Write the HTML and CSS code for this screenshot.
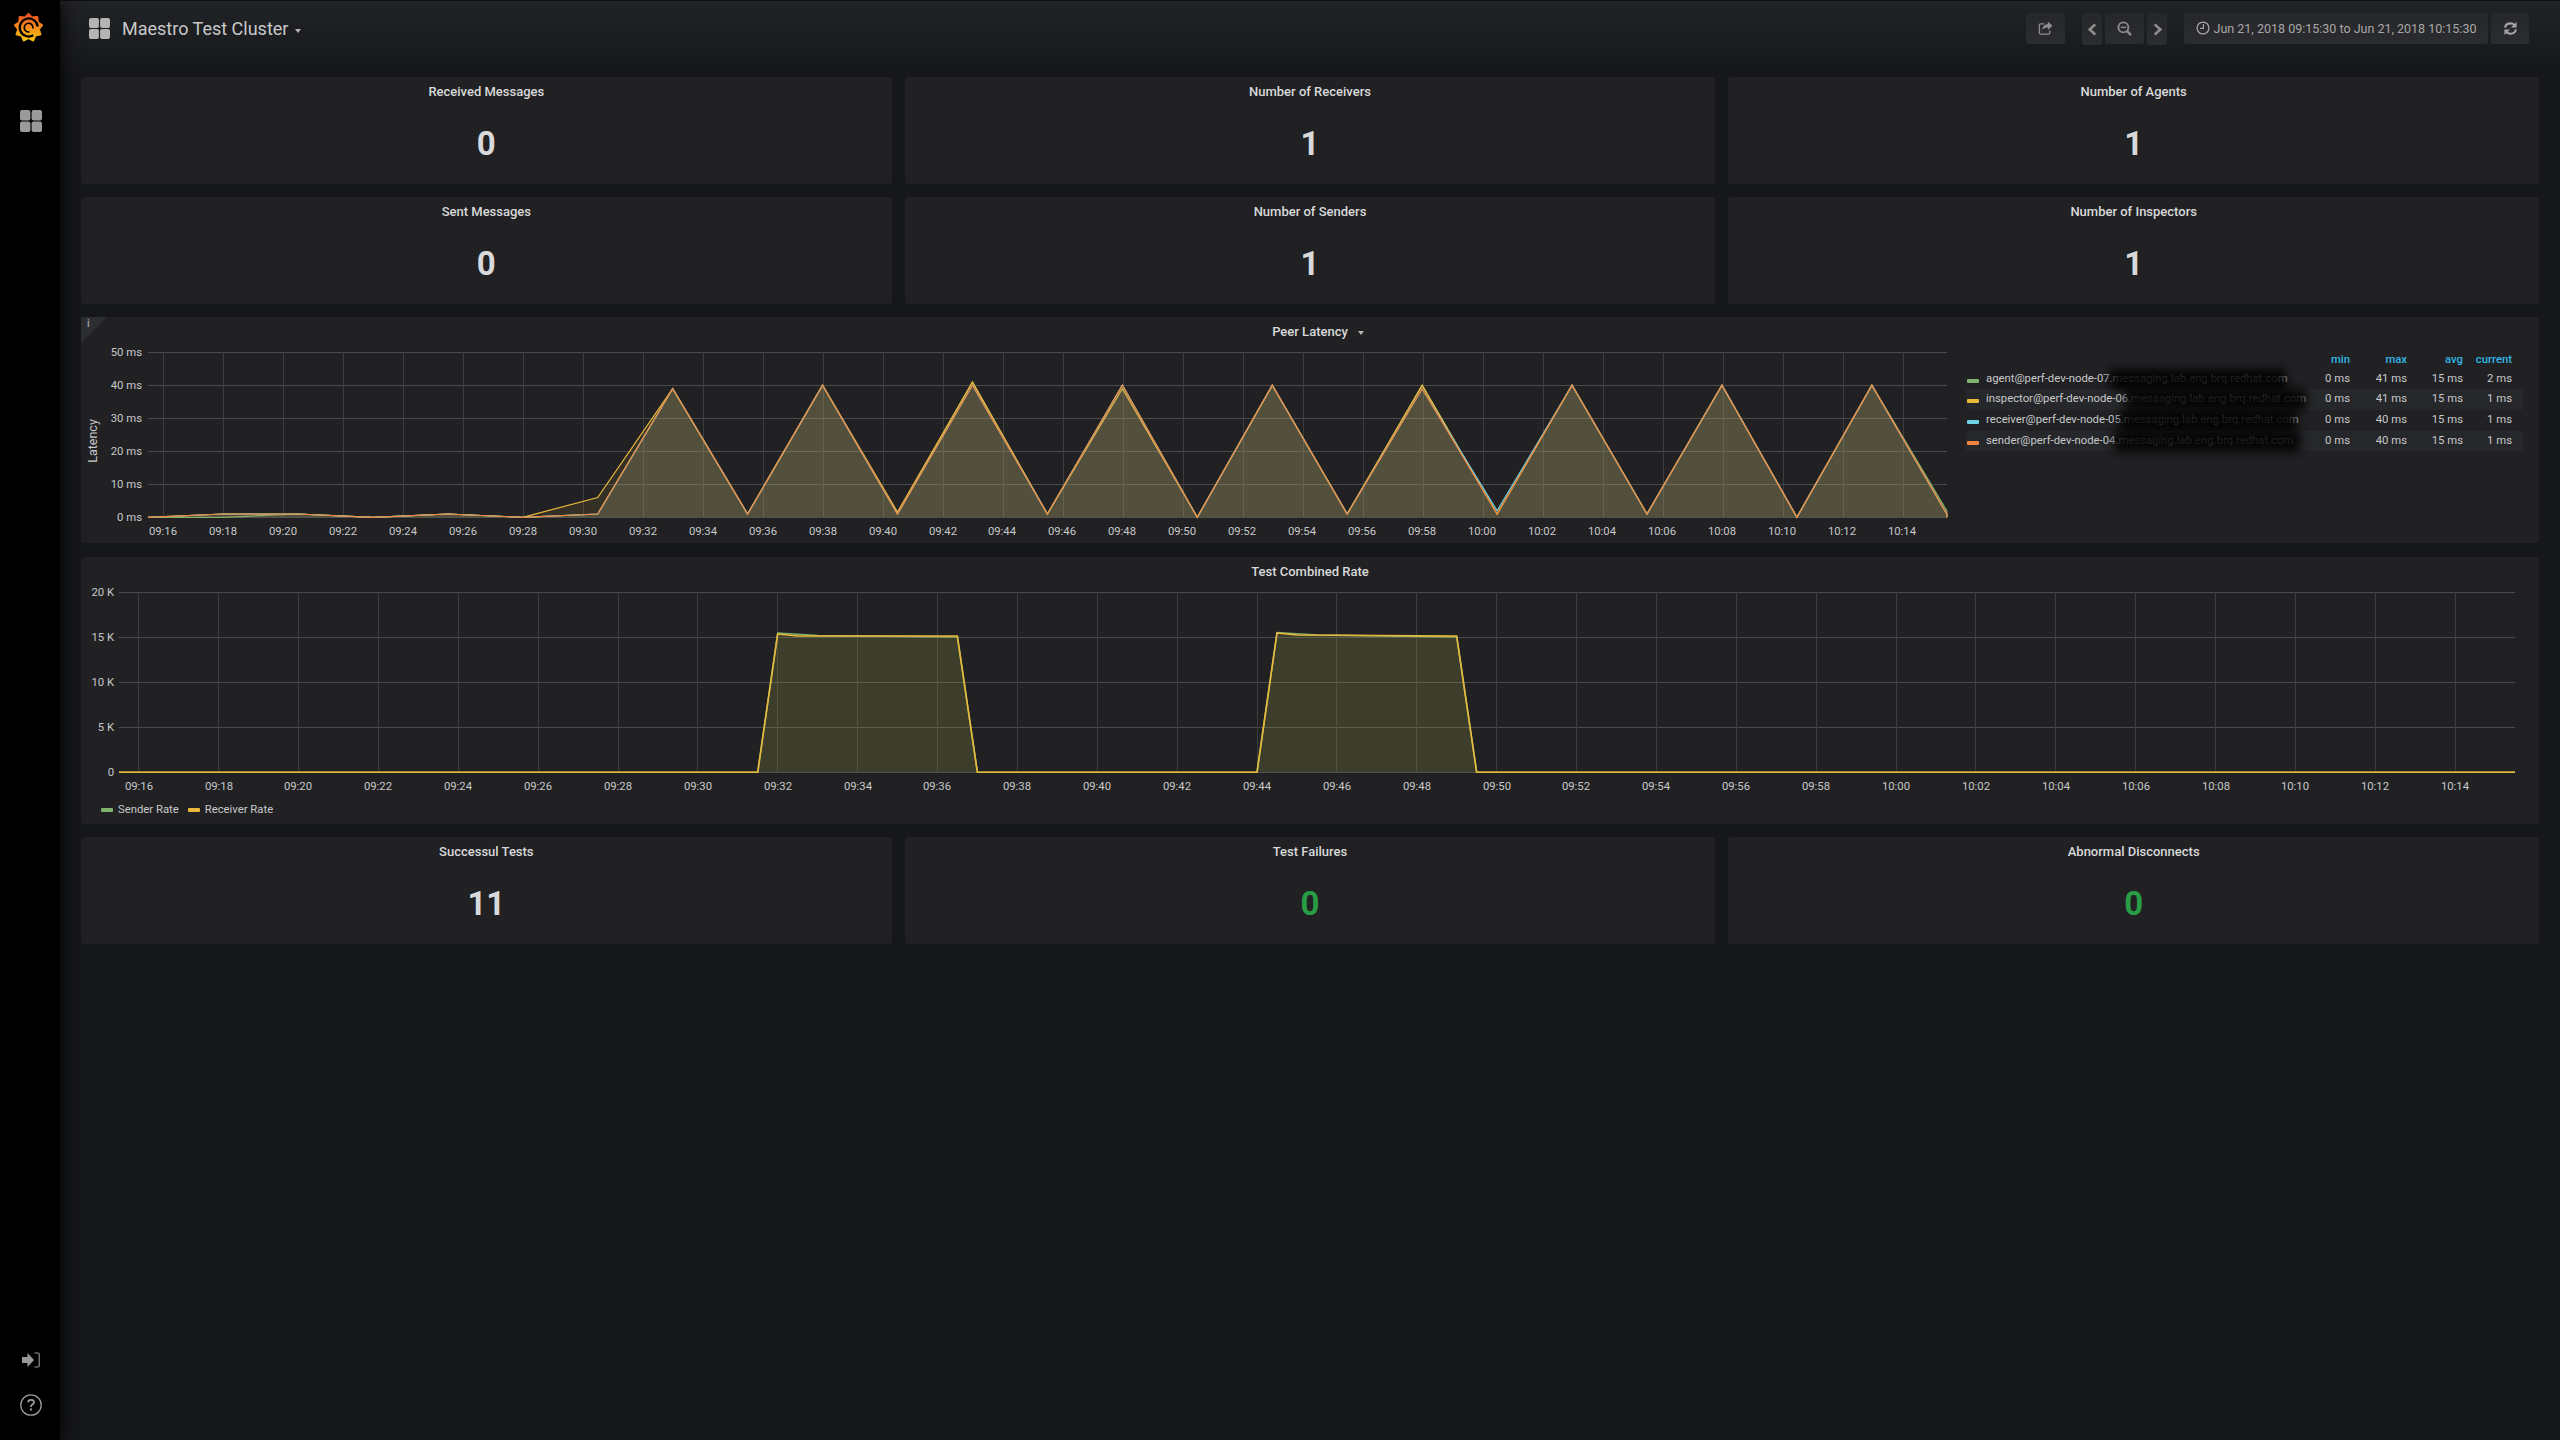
FILE: index.html
```html
<!DOCTYPE html>
<html lang="en">
<head>
    <meta charset="UTF-8">
    <title>Maestro Test Cluster - Grafana</title>
    <link rel="stylesheet" href="styles.css">
</head>
<body>
    <aside class="sidebar">
        <svg class="logo" viewBox="0 0 32 32">
            <defs>
                <linearGradient id="logo-fill" x1="0" y1="0" x2="0" y2="1">
                    <stop offset="0" stop-color="#ee4f26"/>
                    <stop offset="1" stop-color="#fbc80e"/>
                </linearGradient>
            </defs>
            <polygon fill="url(#logo-fill)" stroke="url(#logo-fill)" stroke-linejoin="round" points="16,1 19.9,5.2 25.6,4.5 26,10.25 30.8,13.4 27.3,18 29,23.5 23.4,24.8 21.1,30.1 16,27.5 10.9,30.1 8.6,24.8 3,23.5 4.7,18 1.2,13.4 6,10.25 6.4,4.5 12.1,5.2"/>
            <path d="M25.500 15A9.300 9.300 0 1 0 21 24" fill="none" stroke="#000" stroke-width="2.300"/>
            <path d="M20.500 17A4.500 4.500 0 1 0 17 20.500" fill="none" stroke="#000" stroke-width="1.700"/>
        </svg>
        <svg class="side-icon side-dash" viewBox="0 0 22 22">
            <rect x="0" y="0" width="10.400" height="10.400" rx="2"/>
            <rect x="11.600" y="0" width="10.400" height="10.400" rx="2"/>
            <rect x="0" y="11.600" width="10.400" height="10.400" rx="2"/>
            <rect x="11.600" y="11.600" width="10.400" height="10.400" rx="2"/>
        </svg>
        <div class="side-bottom">
            <svg class="side-icon side-signin" viewBox="0 0 18 16">
                <path d="M0 5h5.500V1l6.500 7-6.500 7v-4H0z"/>
                <path d="M12.500 1H16q1.200 0 1.200 1.200v11.600Q17.200 15 16 15h-3.500" fill="none" stroke="#9a9a9a" stroke-width="1.100"/>
            </svg>
            <svg class="side-help" viewBox="0 0 22 22">
                <circle cx="11" cy="11" r="10.200" fill="none" stroke="#9a9a9a" stroke-width="1.300"/>
                <path d="M8 8.400Q8.200 5.800 11 5.800 14 5.800 14 8.200 14 9.600 12.400 10.500 11 11.300 11 13" fill="none" stroke="#9a9a9a" stroke-width="1.800"/>
                <rect x="10" y="14.500" width="2" height="2" fill="#9a9a9a"/>
            </svg>
        </div>
    </aside>

    <main class="main">
        <header class="navbar">
            <svg class="nav-dash" viewBox="0 0 22 22">
                <rect x="0" y="0" width="10.400" height="10.400" rx="2"/>
                <rect x="11.600" y="0" width="10.400" height="10.400" rx="2"/>
                <rect x="0" y="11.600" width="10.400" height="10.400" rx="2"/>
                <rect x="11.600" y="11.600" width="10.400" height="10.400" rx="2"/>
            </svg>
            <span class="nav-title">Maestro Test Cluster</span>
            <span class="caret nav-caret"></span>

            <div class="nav-actions">
                <div class="nav-btn btn-wide group-end">
                    <svg class="icon" viewBox="0 0 16 16">
                        <path d="M7 3H3Q1.500 3 1.500 4.500V12.500Q1.500 14 3 14H11Q12.500 14 12.500 12.500V10" fill="none" stroke="#8e8e8e" stroke-width="1.400"/>
                        <path d="M10.500 0.500L15.500 5 10.500 9.500V7Q6 7 4.500 10.500 4.500 4 10.500 3.200z" fill="#8e8e8e"/>
                    </svg>
                </div>
                <div class="nav-btn btn-arrow">
                    <svg class="icon" viewBox="0 0 16 16"><path d="M11 2.500L5 8l6 5.500" fill="none" stroke="#8e8e8e" stroke-width="2.800"/></svg>
                </div>
                <div class="nav-btn btn-wide">
                    <svg class="icon" viewBox="0 0 16 16">
                        <circle cx="6.800" cy="6.800" r="5.300" fill="none" stroke="#8e8e8e" stroke-width="2"/>
                        <path d="M10.500 10.500L15 15" stroke="#8e8e8e" stroke-width="2.600"/>
                        <path d="M4 6.800h5.600" stroke="#8e8e8e" stroke-width="1.600"/>
                    </svg>
                </div>
                <div class="nav-btn btn-arrow group-end">
                    <svg class="icon" viewBox="0 0 16 16"><path d="M5 2.500L11 8l-6 5.500" fill="none" stroke="#8e8e8e" stroke-width="2.800"/></svg>
                </div>
                <div class="nav-btn btn-time">
                    <svg class="icon-clock" viewBox="0 0 14 14">
                        <circle cx="7" cy="7" r="5.900" fill="none" stroke="#a5a5a5" stroke-width="1.300"/>
                        <path d="M7.400 3v4.400H4" fill="none" stroke="#a5a5a5" stroke-width="1.200"/>
                    </svg>
                    Jun 21, 2018 09:15:30 to Jun 21, 2018 10:15:30
                </div>
                <div class="nav-btn btn-refresh">
                    <svg class="icon" viewBox="0 0 16 16">
                        <path d="M2.200 7Q3 2.500 8 2.500 10.800 2.500 12.400 4.500" fill="none" stroke="#a5a5a5" stroke-width="2.200"/>
                        <path d="M14.500 1v6h-6z" fill="#a5a5a5"/>
                        <path d="M13.800 9Q13 13.500 8 13.500 5.200 13.500 3.600 11.500" fill="none" stroke="#a5a5a5" stroke-width="2.200"/>
                        <path d="M1.500 15V9h6z" fill="#a5a5a5"/>
                    </svg>
                </div>
            </div>
        </header>

        <section class="stat-row">
            <div class="panel stat">
                <div class="panel-title">Received Messages</div>
                <div class="stat-value">0</div>
            </div>
            <div class="panel stat">
                <div class="panel-title">Number of Receivers</div>
                <div class="stat-value">1</div>
            </div>
            <div class="panel stat">
                <div class="panel-title">Number of Agents</div>
                <div class="stat-value">1</div>
            </div>
        </section>

        <section class="stat-row">
            <div class="panel stat">
                <div class="panel-title">Sent Messages</div>
                <div class="stat-value">0</div>
            </div>
            <div class="panel stat">
                <div class="panel-title">Number of Senders</div>
                <div class="stat-value">1</div>
            </div>
            <div class="panel stat">
                <div class="panel-title">Number of Inspectors</div>
                <div class="stat-value">1</div>
            </div>
        </section>

        <section class="panel graph-peer">
            <div class="info-corner"><span>i</span></div>
            <div class="panel-title"><span class="title-text">Peer Latency<span class="caret title-caret"></span></span></div>
            <div class="peer-body">
                <svg class="chart" width="1885" height="200" viewBox="0 0 1885 200">
                    <path class="grid-h" d="M67 9.500H1866M67 42.500H1866M67 75.500H1866M67 108.500H1866M67 141.500H1866M67 174.500H1866"/>
                    <path class="grid-v" d="M82.500 9V174M142.500 9V174M202.500 9V174M262.500 9V174M322.500 9V174M382.500 9V174M442.500 9V174M502.500 9V174M562.500 9V174M622.500 9V174M682.500 9V174M742.500 9V174M802.500 9V174M862.500 9V174M922.500 9V174M982.500 9V174M1042.500 9V174M1102.500 9V174M1162.500 9V174M1222.500 9V174M1282.500 9V174M1342.500 9V174M1402.500 9V174M1462.500 9V174M1522.500 9V174M1582.500 9V174M1642.500 9V174M1702.500 9V174M1762.500 9V174M1822.500 9V174"/>

                    <polyline class="series s-green" points="67,174.300 141.950,174.300 216.900,171 291.850,174.300 366.800,171 441.750,174.300 516.700,171 591.650,45.600 666.600,171 741.550,42.300 816.500,171 891.450,39 966.400,171 1041.350,42.300 1116.300,174.300 1191.250,42.300 1266.200,171 1341.150,42.300 1416.100,171 1491.050,42.300 1566,171 1640.950,42.300 1715.900,174.300 1790.850,42.300 1865.800,167.700 1865.800,174.300"/>
                    <polyline class="series s-yellow" points="67,174.300 141.950,171 216.900,171 291.850,174.300 366.800,171 441.750,174.300 516.700,154.500 591.650,45.600 666.600,171 741.550,42.300 816.500,169 891.450,39 966.400,171 1041.350,45.600 1116.300,174.300 1191.250,42.300 1266.200,171 1341.150,42.300 1416.100,171 1491.050,42.300 1566,171 1640.950,42.300 1715.900,174.300 1790.850,42.300 1865.800,171 1865.800,174.300"/>
                    <polyline class="series s-blue" points="67,174.300 141.950,171 216.900,171 291.850,174.300 366.800,171 441.750,174.300 516.700,171 591.650,45.600 666.600,171 741.550,42.300 816.500,171 891.450,42.300 966.400,171 1041.350,42.300 1116.300,174.300 1191.250,42.300 1266.200,171 1341.150,45.600 1416.100,167.700 1491.050,42.300 1566,171 1640.950,42.300 1715.900,174.300 1790.850,42.300 1865.800,171 1865.800,174.300"/>
                    <polyline class="series s-orange" points="67,174.300 141.950,171 216.900,171 291.850,174.300 366.800,171 441.750,174.300 516.700,171 591.650,45.600 666.600,171 741.550,42.300 816.500,171 891.450,42.300 966.400,171 1041.350,42.300 1116.300,174.300 1191.250,42.300 1266.200,171 1341.150,45.600 1416.100,171 1491.050,42.300 1566,171 1640.950,42.300 1715.900,174.300 1790.850,42.300 1865.800,171 1865.800,174.300"/>

                    <text class="axis-label" transform="rotate(-90 16 98)" x="16" y="98">Latency</text>
                    <g class="tick-y">
                        <text x="61" y="13">50 ms</text>
                        <text x="61" y="46">40 ms</text>
                        <text x="61" y="79">30 ms</text>
                        <text x="61" y="112">20 ms</text>
                        <text x="61" y="145">10 ms</text>
                        <text x="61" y="178">0 ms</text>
                    </g>
                    <g class="tick-x">
                        <text x="82" y="192">09:16</text>
                        <text x="142" y="192">09:18</text>
                        <text x="202" y="192">09:20</text>
                        <text x="262" y="192">09:22</text>
                        <text x="322" y="192">09:24</text>
                        <text x="382" y="192">09:26</text>
                        <text x="442" y="192">09:28</text>
                        <text x="502" y="192">09:30</text>
                        <text x="562" y="192">09:32</text>
                        <text x="622" y="192">09:34</text>
                        <text x="682" y="192">09:36</text>
                        <text x="742" y="192">09:38</text>
                        <text x="802" y="192">09:40</text>
                        <text x="862" y="192">09:42</text>
                        <text x="921" y="192">09:44</text>
                        <text x="981" y="192">09:46</text>
                        <text x="1041" y="192">09:48</text>
                        <text x="1101" y="192">09:50</text>
                        <text x="1161" y="192">09:52</text>
                        <text x="1221" y="192">09:54</text>
                        <text x="1281" y="192">09:56</text>
                        <text x="1341" y="192">09:58</text>
                        <text x="1401" y="192">10:00</text>
                        <text x="1461" y="192">10:02</text>
                        <text x="1521" y="192">10:04</text>
                        <text x="1581" y="192">10:06</text>
                        <text x="1641" y="192">10:08</text>
                        <text x="1701" y="192">10:10</text>
                        <text x="1761" y="192">10:12</text>
                        <text x="1821" y="192">10:14</text>
                    </g>
                </svg>

                <div class="legend-table">
                    <div class="legend-row legend-head">
                        <span></span><span>min</span><span>max</span><span>avg</span><span>current</span>
                    </div>
                    <div class="legend-row">
                        <span class="legend-name"><i class="swatch c-green"></i>agent@perf-dev-node-07.messaging.lab.eng.brq.redhat.com<b class="smudge smudge-1"></b></span>
                        <span>0 ms</span><span>41 ms</span><span>15 ms</span><span>2 ms</span>
                    </div>
                    <div class="legend-row stripe">
                        <span class="legend-name"><i class="swatch c-yellow"></i>inspector@perf-dev-node-06.messaging.lab.eng.brq.redhat.com<b class="smudge smudge-2"></b></span>
                        <span>0 ms</span><span>41 ms</span><span>15 ms</span><span>1 ms</span>
                    </div>
                    <div class="legend-row">
                        <span class="legend-name"><i class="swatch c-blue"></i>receiver@perf-dev-node-05.messaging.lab.eng.brq.redhat.com<b class="smudge smudge-3"></b></span>
                        <span>0 ms</span><span>40 ms</span><span>15 ms</span><span>1 ms</span>
                    </div>
                    <div class="legend-row stripe">
                        <span class="legend-name"><i class="swatch c-orange"></i>sender@perf-dev-node-04.messaging.lab.eng.brq.redhat.com<b class="smudge smudge-4"></b></span>
                        <span>0 ms</span><span>40 ms</span><span>15 ms</span><span>1 ms</span>
                    </div>
                </div>
            </div>
        </section>

        <section class="panel graph-rate">
            <div class="panel-title">Test Combined Rate</div>
            <svg class="chart" width="2458" height="212" viewBox="0 0 2458 212">
                <path class="grid-h" d="M38 9.500H2434M38 54.500H2434M38 99.500H2434M38 144.500H2434M38 189.500H2434"/>
                <path class="grid-v" d="M57.500 9V189M137.500 9V189M217.500 9V189M297.500 9V189M377.500 9V189M457.500 9V189M537.500 9V189M616.500 9V189M696.500 9V189M776.500 9V189M856.500 9V189M936.500 9V189M1016.500 9V189M1096.500 9V189M1176.500 9V189M1255.500 9V189M1335.500 9V189M1415.500 9V189M1495.500 9V189M1575.500 9V189M1655.500 9V189M1735.500 9V189M1815.500 9V189M1894.500 9V189M1974.500 9V189M2054.500 9V189M2134.500 9V189M2214.500 9V189M2294.500 9V189M2374.500 9V189"/>

                <polyline class="rate s-green" points="38,189.300 676.700,189.300 696.700,50 736.600,52.500 876.400,54 896.400,189.300 1176,189.300 1196,49.500 1236,52 1375.700,54 1395.700,189.300 2434,189.300"/>
                <polyline class="rate s-yellow" points="38,189.300 676.700,189.300 696.700,51 716.700,53 876.400,53 896.400,189.300 1176,189.300 1196,50 1216,52 1375.700,53 1395.700,189.300 2434,189.300"/>

                <g class="tick-y">
                    <text x="33" y="13">20 K</text>
                    <text x="33" y="58">15 K</text>
                    <text x="33" y="103">10 K</text>
                    <text x="33" y="148">5 K</text>
                    <text x="33" y="193">0</text>
                </g>
                <g class="tick-x">
                    <text x="58" y="207">09:16</text>
                    <text x="138" y="207">09:18</text>
                    <text x="217" y="207">09:20</text>
                    <text x="297" y="207">09:22</text>
                    <text x="377" y="207">09:24</text>
                    <text x="457" y="207">09:26</text>
                    <text x="537" y="207">09:28</text>
                    <text x="617" y="207">09:30</text>
                    <text x="697" y="207">09:32</text>
                    <text x="777" y="207">09:34</text>
                    <text x="856" y="207">09:36</text>
                    <text x="936" y="207">09:38</text>
                    <text x="1016" y="207">09:40</text>
                    <text x="1096" y="207">09:42</text>
                    <text x="1176" y="207">09:44</text>
                    <text x="1256" y="207">09:46</text>
                    <text x="1336" y="207">09:48</text>
                    <text x="1416" y="207">09:50</text>
                    <text x="1495" y="207">09:52</text>
                    <text x="1575" y="207">09:54</text>
                    <text x="1655" y="207">09:56</text>
                    <text x="1735" y="207">09:58</text>
                    <text x="1815" y="207">10:00</text>
                    <text x="1895" y="207">10:02</text>
                    <text x="1975" y="207">10:04</text>
                    <text x="2055" y="207">10:06</text>
                    <text x="2135" y="207">10:08</text>
                    <text x="2214" y="207">10:10</text>
                    <text x="2294" y="207">10:12</text>
                    <text x="2374" y="207">10:14</text>
                </g>
            </svg>
            <div class="rate-legend">
                <span class="rate-key"><i class="swatch c-green"></i>Sender Rate</span>
                <span class="rate-key"><i class="swatch c-yellow"></i>Receiver Rate</span>
            </div>
        </section>

        <section class="stat-row">
            <div class="panel stat">
                <div class="panel-title">Successul Tests</div>
                <div class="stat-value">11</div>
            </div>
            <div class="panel stat">
                <div class="panel-title">Test Failures</div>
                <div class="stat-value ok">0</div>
            </div>
            <div class="panel stat">
                <div class="panel-title">Abnormal Disconnects</div>
                <div class="stat-value ok">0</div>
            </div>
        </section>
    </main>
</body>
</html>
```

FILE: styles.css
```css
body {
    font-family: Roboto, 'Liberation Sans', sans-serif;
    background: #161719;
    color: #d8d9da;
    margin: 0;
    display: flex;
    height: 100vh;
    overflow: hidden;
}

/* sidebar */
.sidebar {
    width: 60px;
    flex: none;
    background: #000;
    box-shadow: 0 0 18px #000;
    position: relative;
    z-index: 1;
    display: flex;
    flex-direction: column;
    align-items: center;
}
.logo {
    width: 31px;
    height: 31px;
    margin-top: 12px;
    margin-left: -3px;
}
.side-icon {
    fill: #9a9a9a;
}
.side-dash {
    width: 22px;
    height: 22px;
    margin-top: 67px;
    margin-left: 2px;
}
.side-bottom {
    margin-top: auto;
    margin-bottom: 24px;
    margin-left: 2px;
    display: flex;
    flex-direction: column;
    align-items: center;
    gap: 26px;
}
.side-signin {
    width: 18px;
    height: 16px;
}
.side-help {
    width: 22px;
    height: 22px;
}

/* top bar */
.main {
    flex: 1;
    padding: 0 21px;
    background: linear-gradient(#222327, #161719 72px) no-repeat;
}
.navbar {
    height: 77px;
    border-top: 1px solid #0c0d0e;
    margin: 0 -21px;
    padding: 12px 31px 0 29px;
    box-sizing: border-box;
    display: flex;
    align-items: flex-start;
}
.nav-dash {
    width: 21px;
    height: 21px;
    margin-top: 5px;
    fill: #b4b4b4;
}
.nav-title {
    font-size: 18px;
    line-height: 32px;
    color: #c8c9ca;
    margin-left: 12px;
}
.caret {
    display: inline-block;
    border-left: 3.5px solid transparent;
    border-right: 3.5px solid transparent;
    border-top: 4px solid #b4b4b4;
}
.nav-caret {
    margin: 16px 0 0 7px;
}
.nav-actions {
    margin-left: auto;
    display: flex;
    gap: 3px;
}
.nav-btn {
    height: 31px;
    box-sizing: border-box;
    background: linear-gradient(#26272a, #2b2c2f);
    border-radius: 3px;
    display: flex;
    align-items: center;
    justify-content: center;
}
.group-end {
    margin-right: 14px;
}
.btn-wide {
    width: 39px;
}
.btn-arrow {
    width: 20px;
    height: 32px;
}
.btn-time {
    width: 304px;
    font-size: 12.5px;
    color: #a8a8a8;
    gap: 4px;
}
.btn-refresh {
    width: 38px;
}
.icon {
    width: 15px;
    height: 15px;
}
.icon-clock {
    width: 14px;
    height: 14px;
    margin-top: -2px;
}

/* panels */
.panel {
    background: #212124;
    border-radius: 3px;
    position: relative;
}
.panel-title {
    height: 26px;
    line-height: 29px;
    font-size: 13px;
    font-weight: 500;
    text-align: center;
    color: #d8d9da;
}
.stat-row {
    display: grid;
    grid-template-columns: repeat(3, 1fr);
    gap: 13px;
    margin-bottom: 13px;
}
.stat {
    height: 107px;
}
.stat-value {
    margin-top: 21px;
    font-size: 33px;
    line-height: 40px;
    font-weight: 700;
    text-align: center;
    color: #d8d9da;
}
.stat-value.ok {
    color: #299c46;
}

/* graphs */
.chart {
    display: block;
}
.graph-peer {
    height: 226px;
}
.graph-rate {
    height: 267px;
    margin-top: 14px;
    margin-bottom: 13px;
}
.info-corner {
    position: absolute;
    left: 0;
    top: 0;
    width: 26px;
    height: 26px;
    background: #2d2e31;
    clip-path: polygon(0 0, 100% 0, 0 100%);
    font-size: 10px;
    font-weight: 700;
    color: #9a9a9a;
    padding-left: 6px;
    box-sizing: border-box;
    line-height: 13px;
}
.title-text {
    position: relative;
}
.title-caret {
    position: absolute;
    right: -16px;
    top: 7px;
}
.peer-body {
    display: flex;
    align-items: flex-start;
}
.grid-h {
    stroke: #4a4a4c;
    fill: none;
    shape-rendering: crispEdges;
}
.grid-v {
    stroke: #3d3d3f;
    fill: none;
    shape-rendering: crispEdges;
}
.series {
    fill-opacity: 0.1;
    stroke-width: 1.2;
}
.rate {
    fill-opacity: 0.1;
    stroke-width: 1.6;
}
.s-green {
    fill: #7eb26d;
    stroke: #7eb26d;
}
.s-yellow {
    fill: #eab839;
    stroke: #eab839;
}
.s-blue {
    fill: #6ed0e0;
    stroke: #6ed0e0;
}
.s-orange {
    fill: #ef843c;
    stroke: #ef843c;
}
.tick-x text,
.tick-y text {
    font-size: 11.3px;
    fill: #c8c9ca;
}
.tick-x text {
    text-anchor: middle;
}
.tick-y text {
    text-anchor: end;
}
.axis-label {
    font-size: 12.5px;
    fill: #c8c9ca;
    text-anchor: middle;
}

/* peer legend */
.legend-table {
    width: 557px;
    padding-top: 7px;
    font-size: 11.3px;
    color: #c8c9ca;
}
.legend-row {
    display: grid;
    grid-template-columns: 338px 57px 57px 56px 49px;
    height: 20.7px;
    line-height: 20.7px;
    text-align: right;
}
.legend-row span {
    padding-right: 11px;
}
.legend-head {
    height: 18.7px;
    line-height: 20.7px;
    color: #33b5e5;
    font-weight: 500;
}
.stripe {
    background: #26272a;
}
.legend-row .legend-name {
    padding: 0 0 0 20px;
    text-align: left;
    white-space: nowrap;
    position: relative;
}
.swatch {
    display: inline-block;
    width: 12px;
    height: 4px;
    border-radius: 1px;
    vertical-align: 1px;
}
.legend-name .swatch {
    position: absolute;
    left: 1px;
    top: 10px;
}
.c-green {
    background: #7eb26d;
}
.c-yellow {
    background: #eab839;
}
.c-blue {
    background: #6ed0e0;
}
.c-orange {
    background: #ef843c;
}
.smudge {
    position: absolute;
    top: 0;
    height: 21px;
    background: rgba(0, 0, 0, 0.88);
    filter: blur(5px);
}
.smudge-1 {
    left: 144px;
    width: 176px;
}
.smudge-2 {
    left: 160px;
    width: 180px;
}
.smudge-3 {
    left: 154px;
    width: 176px;
}
.smudge-4 {
    left: 148px;
    width: 186px;
}
.rate-legend {
    height: 29px;
    display: flex;
    align-items: center;
    gap: 9px;
    padding-left: 20px;
    font-size: 11.3px;
    color: #c8c9ca;
}
.rate-key .swatch {
    margin-right: 5px;
}
```
